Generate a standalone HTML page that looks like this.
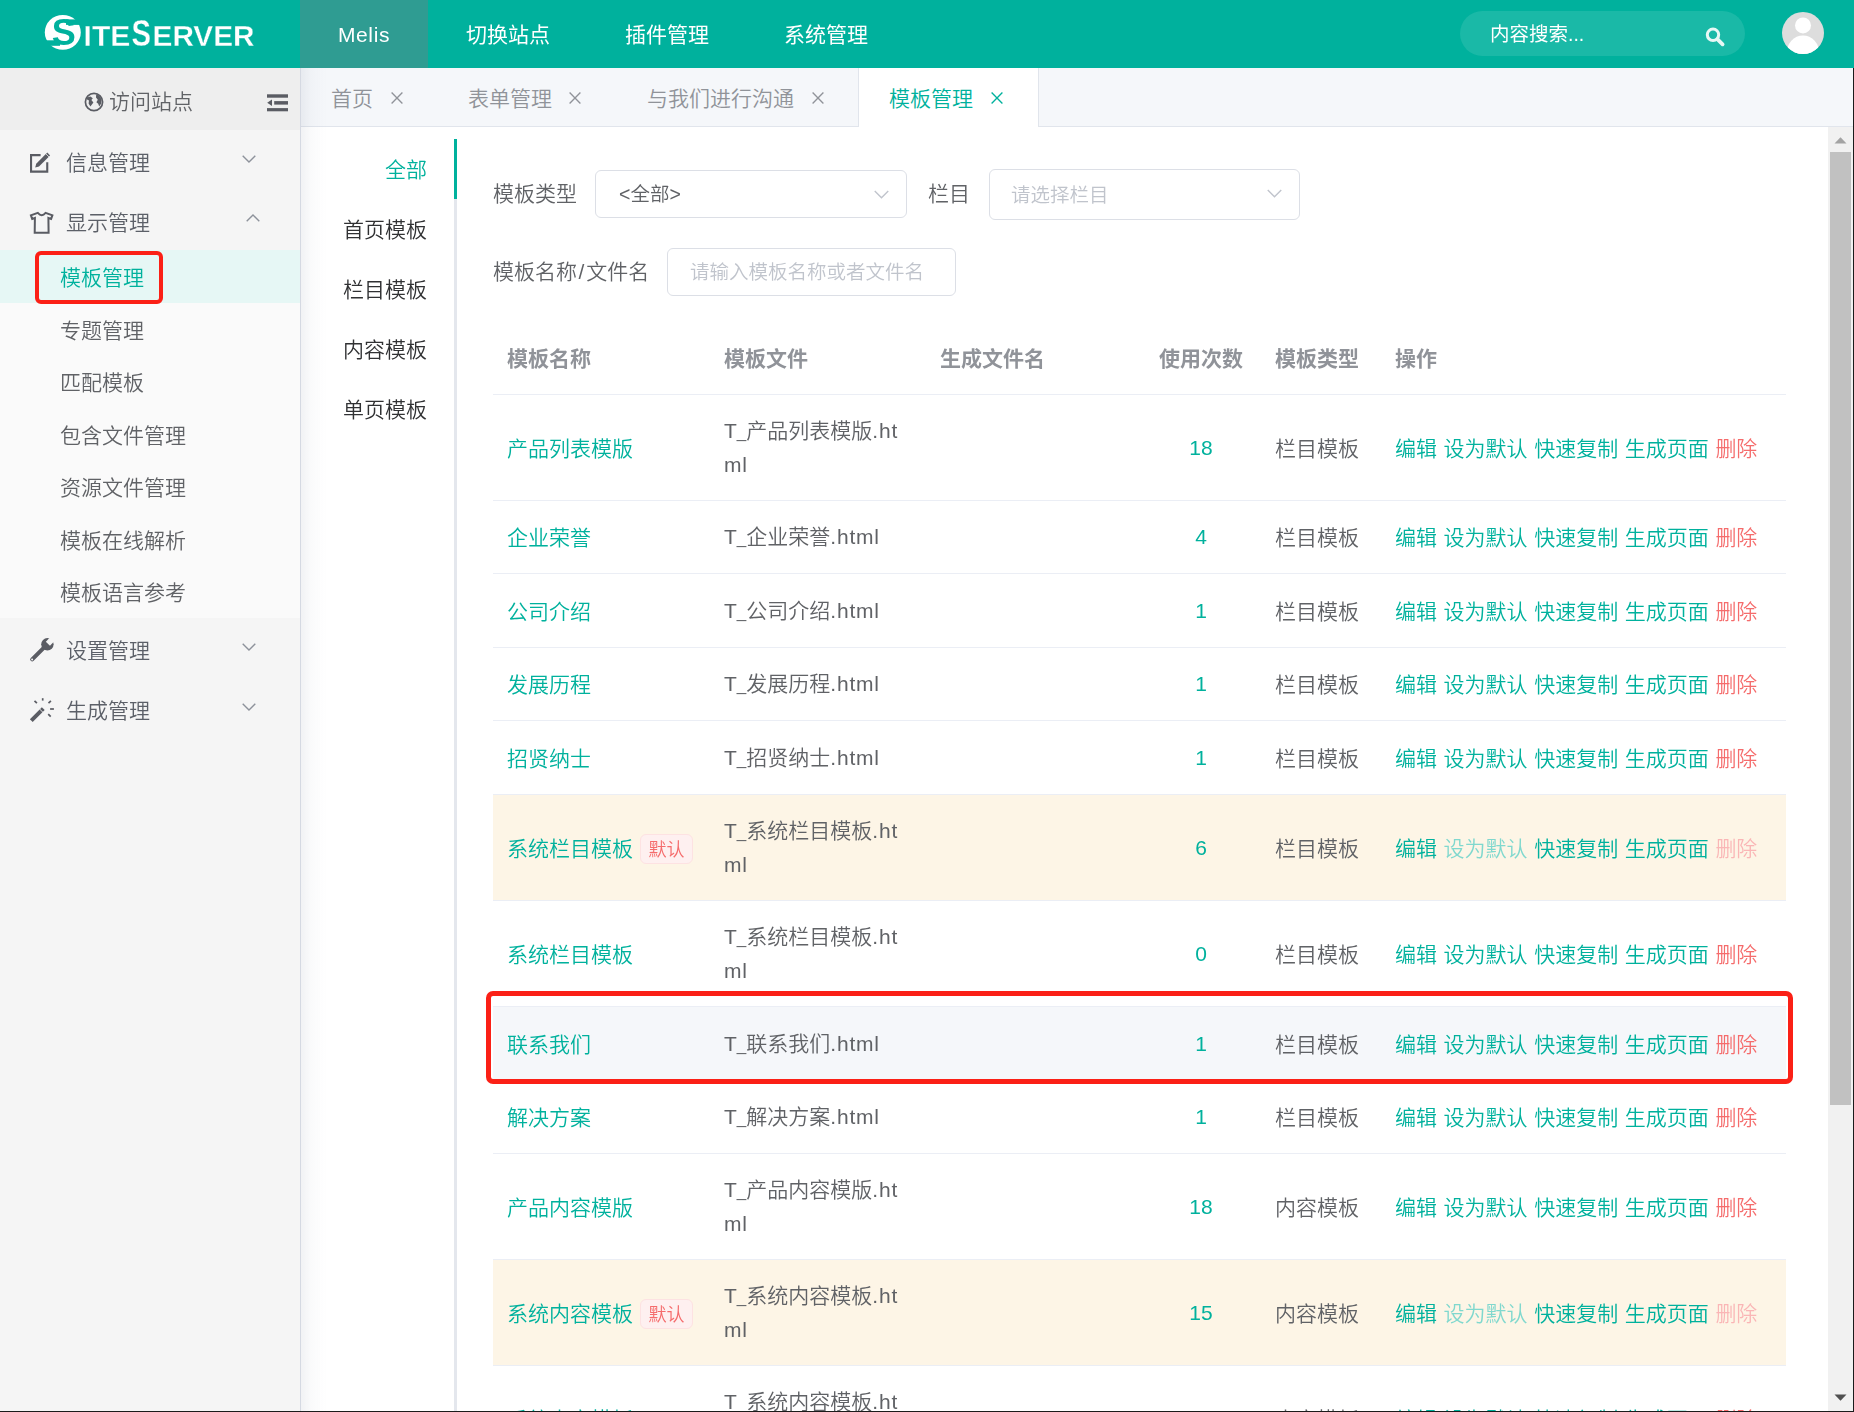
<!DOCTYPE html>
<html lang="zh-CN">
<head>
<meta charset="utf-8">
<title>SiteServer CMS - 模板管理</title>
<style>

*{box-sizing:border-box;margin:0;padding:0}
html,body{width:1854px;height:1412px;overflow:hidden;background:#fff}
body{font-family:"Liberation Sans","Noto Sans CJK SC",sans-serif;font-size:21px;font-weight:350;color:#606266;-webkit-font-smoothing:antialiased}
#app{position:relative;width:1854px;height:1412px;overflow:hidden;background:#fff}
.side,.main,.hdr{will-change:transform}
a{text-decoration:none;color:inherit}
svg{display:block}

/* ---------- top header ---------- */
.hdr{position:absolute;left:0;top:0;width:1854px;height:68px;background:#00b19d;color:#fff}
.logo{position:absolute;left:0;top:0;width:300px;height:68px}
.logo .disc{position:absolute;left:45px;top:15px;width:36px;height:35px}
.logo .w{position:absolute;white-space:nowrap;font-weight:bold;color:#fff;line-height:1;transform-origin:0 0}
.nav{position:absolute;left:300px;top:0;height:68px;display:flex}
.nav a{display:block;height:68px;line-height:69px;font-weight:400;padding:0 36.5px 0 38.5px;font-size:21px;color:#fff;white-space:nowrap}
.nav a.on{background:#2f9c92;letter-spacing:.6px;width:127.5px;padding:0 0 0 38px}
.srch{position:absolute;left:1460px;top:11px;width:285px;height:45px;border-radius:23px;background:rgba(255,255,255,.1)}
.srch span{position:absolute;left:30px;top:0;line-height:46px;font-weight:400;font-size:19.5px;color:#fff}
.srch svg{position:absolute;left:245px;top:16px}
.avatar{position:absolute;left:1782px;top:12px;width:42px;height:42px;border-radius:50%;background:#dddddd;overflow:hidden}

/* ---------- sidebar ---------- */
.side{position:absolute;left:0;top:68px;width:301px;height:1344px;background:#f5f5f5;border-right:1px solid #d5d9e2}
.visit{position:absolute;left:0;top:0;width:300px;height:62px;background:#eeeeee;color:#606266}
.visit .t{position:absolute;left:109px;top:0;line-height:68.5px;font-size:21px}
.visit .globe{position:absolute;left:84px;top:24px}
.visit .fold{position:absolute;left:267px;top:26px}
.menu{position:absolute;left:0;top:62px;width:300px}
.mi{position:relative;height:60px;line-height:66px;padding-left:66px;font-size:21px;color:#5c6068}
.mi svg.ic{position:absolute;left:29px;top:18px}
.mi svg.ar{position:absolute;top:23px}
.sub{background:#fafafa;height:367.5px}
.si{height:52.5px;line-height:56px;padding-left:60px;font-size:21px;color:#606266}
.si.on{background:#e6f7f5;color:#00b19d}
.mark1{position:absolute;left:35px;top:183px;width:128px;height:53px;border:4px solid #fb2016;border-radius:6px}

/* ---------- tab bar ---------- */
.tabs{position:absolute;left:301px;top:68px;width:1553px;height:59px;background:#f5f7fa;border-bottom:1px solid #e1e5ec}
.tab{position:absolute;top:0;height:59px;line-height:62px;font-size:21px;color:#909399;white-space:nowrap}
.tab svg{position:absolute;top:24px}
.tab.on{color:#00b19d;background:#fff;border-left:1px solid #e1e5ec;border-right:1px solid #e1e5ec;height:59px}
.sideshadow{z-index:5;position:absolute;left:301px;top:68px;width:26px;height:1344px;background:linear-gradient(to right,rgba(70,80,110,.075),rgba(70,80,110,.025) 40%,rgba(70,80,110,0));pointer-events:none}

/* ---------- main ---------- */
.main{position:absolute;left:301px;top:127px;width:1527px;height:1285px;overflow:hidden;background:#fff}
.vt{position:absolute;left:0;top:12px;width:156px;height:1300px}
.vt .line{position:absolute;left:153px;top:0;width:3px;height:1300px;background:#e4e7ed}
.vt .bar{position:absolute;left:153px;top:0;width:3px;height:60px;background:#00b19d}
.vt .it{height:60px;line-height:62px;text-align:right;padding-right:30px;font-size:21px;color:#303133}
.vt .it.on{color:#00b19d}

.lbl{position:absolute;font-size:21px;color:#606266;line-height:48px;white-space:nowrap}
.inp{position:absolute;border:1px solid #dcdfe6;border-radius:6px;background:#fff;font-size:19.5px;color:#606266;white-space:nowrap}
.inp span{position:absolute;top:0}
.inp .ph{color:#c0c4cc}
.inp svg{position:absolute}

/* ---------- table ---------- */
.tb{position:absolute;left:192px;top:0;width:1293px}
.r{position:absolute;left:0;width:1293px;border-bottom:1px solid #ebeef5}
.r.warn{background:#fdf5e6}
.r.hov{background:#f5f7fa}
.c{position:absolute;top:0;height:100%;padding:0 15px;display:flex;align-items:center;line-height:34px;font-size:21px;color:#606266}
.c>div{width:100%;word-break:break-all;position:relative;top:1px}
.c2>div{top:0}
.t1{letter-spacing:0}.us{font-size:17px;line-height:0}.t2{letter-spacing:.8px}
.c1{left:0;width:216px}.c2{left:216px;width:216px}.c3{left:432px;width:216px}
.c4{left:648px;width:120px;text-align:center}.c5{left:768px;width:120px}.c6{left:888px;width:405px;white-space:nowrap;word-spacing:.75px}
.c1,.c5,.c6{padding-left:14px}
.c4>div{top:0}
.th .c{font-weight:bold;color:#909399}
.th .c>div{top:1px}
.lk{color:#00b19d}
.del{color:#f56c6c}
.lk.dis{color:#80d8ce}
.del.dis{color:#fab6b6}
.tag{display:inline-block;height:30px;line-height:31px;padding:0 7.5px;margin-left:7px;font-size:18px;color:#f56c6c;background:#fef0f0;border:1px solid #fde2e2;border-radius:6px;vertical-align:0}
.mark2{z-index:6;position:absolute;left:185px;top:864px;width:1307px;height:93px;border:5px solid #fb2016;border-radius:7px}

/* ---------- scrollbar & screenshot edges ---------- */
.sb{position:absolute;left:1828px;top:127px;width:25px;height:1284px;background:#f1f1f1}
.sb .thumb{position:absolute;left:2px;top:25px;width:21px;height:953px;background:#c1c1c1}
.sb svg{position:absolute;left:6px}
.edge-r{position:absolute;left:1853px;top:68px;width:1px;height:1344px;background:#1b1b1b}
.edge-b{position:absolute;left:0;top:1411px;width:1854px;height:1px;background:#1b1b1b}

</style>
</head>
<body>
<div id="app">

<div class="hdr">
  <div class="logo">
    <svg width="300" height="68" viewBox="0 0 300 68">
      <ellipse cx="62.8" cy="32.4" rx="18" ry="17.4" fill="#fff"/>
      <text x="63.8" y="45.4" text-anchor="middle" font-family="Liberation Sans, sans-serif" font-weight="bold" font-size="36" fill="#00b19d">S</text>
      <rect x="66" y="19.4" width="16" height="5.5" fill="#00b19d"/>
      <rect x="43" y="40.3" width="17" height="5.5" fill="#00b19d"/>
      <g fill="#fff" stroke="#00b19d" stroke-width="0.3" font-family="Liberation Sans, sans-serif" font-weight="bold">
        <text x="0" y="0" font-size="28.6" transform="translate(83.6 45.7) scale(1.05 1)">ITE</text>
        <text x="0" y="0" font-size="37.5" transform="translate(131.4 45.7) scale(.78 1)">S</text>
        <text x="0" y="0" font-size="28.6" transform="translate(152.6 45.7) scale(1.04 1)">ERVER</text>
      </g>
    </svg>
  </div>
  <div class="nav">
    <a class="on">Melis</a><a>切换站点</a><a>插件管理</a><a>系统管理</a>
  </div>
  <div class="srch">
    <span>内容搜索...</span>
    <svg width="21" height="20" viewBox="0 0 21 20">
      <circle cx="8" cy="7.8" r="5.7" fill="none" stroke="#e8f8f5" stroke-width="3"/>
      <path d="M12.6,12.4 L17.6,17.3" stroke="#e8f8f5" stroke-width="3.8" stroke-linecap="round"/>
    </svg>
  </div>
  <div class="avatar">
    <svg width="42" height="42" viewBox="0 0 42 42">
      <circle cx="21" cy="13.4" r="8" fill="#fff"/>
      <ellipse cx="21" cy="42" rx="16.5" ry="18.6" fill="#fff"/>
    </svg>
  </div>
</div>


<div class="side">
  <div class="visit">
    <svg class="globe" width="20" height="20" viewBox="0 0 20 20">
  <circle cx="10" cy="10" r="8.6" fill="none" stroke="#5a5c63" stroke-width="1.7"/>
  <path d="M3.0,5.6 L6.4,4.4 L8.8,6.2 L7.4,8.0 L9.4,10.4 L6.4,14.6 L4.6,11.4 L5.0,8.6 L3.0,7.6 Z" fill="#5a5c63"/>
  <path d="M12.2,2.2 L15.4,3.8 L17.6,7.4 L17.2,11.6 L15.2,14.6 L14.2,11.8 L12.4,10.2 L13.8,7.8 L12.0,5.6 Z" fill="#5a5c63"/>
</svg>
    <span class="t">访问站点</span>
    <svg class="fold" width="21" height="18" viewBox="0 0 21 18">
  <rect x="0" y="0.3" width="21" height="3.4" fill="#5a5c63"/>
  <rect x="7.2" y="7.1" width="13.8" height="3.5" fill="#5a5c63"/>
  <rect x="0" y="14.1" width="21" height="3.2" fill="#5a5c63"/>
  <path d="M0.2,8.8 L5,5.6 V12 Z" fill="#5a5c63"/>
</svg>
  </div>
  <div class="menu">
    <div class="mi"><svg class="ic" style="top:20px" width="24" height="24" viewBox="0 0 24 24">
  <path d="M11.6,5.15 H2.05 V21.65 H18.25 V12.2" fill="none" stroke="#5a5c63" stroke-width="2.1"/>
  <path d="M6.2,17.5 L7.2,13.7 L18.3,2.6 L21.1,5.4 L10,16.5 Z" fill="#5a5c63"/>
  <path d="M16.3,3.2 L20.4,7.3" stroke="#f5f5f5" stroke-width="0.8"/>
</svg>信息管理<svg class="ar" style="left:242px;top:25px" width="14" height="8" viewBox="0 0 14 8"><polyline points="0.7,0.8 7,7 13.3,0.8" fill="none" stroke="#8d929b" stroke-width="1.4"/></svg></div>
    <div class="mi"><svg class="ic" style="top:20px" width="26" height="26" viewBox="0 0 26 26">
  <path d="M8.8,2.9 Q12.7,7.4 16.6,2.9 L23.4,5.3 L22.1,8.9 L19.4,8.0 L19.6,22.8 H5.7 L5.9,8.0 L3.2,8.9 L1.9,5.3 Z" fill="none" stroke="#5a5c63" stroke-width="2" stroke-linejoin="miter"/>
</svg>显示管理<svg class="ar" style="left:246px;top:24px" width="14" height="8" viewBox="0 0 14 8"><polyline points="0.7,7.2 7,1 13.3,7.2" fill="none" stroke="#8d929b" stroke-width="1.4"/></svg></div>
    <div class="sub">
      <div class="si on">模板管理</div>
      <div class="si">专题管理</div>
      <div class="si">匹配模板</div>
      <div class="si">包含文件管理</div>
      <div class="si">资源文件管理</div>
      <div class="si">模板在线解析</div>
      <div class="si">模板语言参考</div>
    </div>
    <div class="mi"><svg class="ic" style="top:19px" width="26" height="26" viewBox="0 0 26 26">
  <path d="M3.2,22.4 L15.2,10.4" stroke="#5a5c63" stroke-width="4.1" stroke-linecap="round"/>
  <circle cx="18.4" cy="7.3" r="6.2" fill="#5a5c63"/>
  <path d="M18.9,6.7 L27,-1.6" stroke="#f5f5f5" stroke-width="5.8"/>
  <circle cx="3.1" cy="22.5" r="1" fill="#f5f5f5"/>
</svg>设置管理<svg class="ar" style="left:242px;top:25px" width="14" height="8" viewBox="0 0 14 8"><polyline points="0.7,0.8 7,7 13.3,0.8" fill="none" stroke="#8d929b" stroke-width="1.4"/></svg></div>
    <div class="mi"><svg class="ic" style="top:19px" width="26" height="26" viewBox="0 0 26 26">
  <path d="M2.3,23.7 L14.3,11.7" stroke="#5a5c63" stroke-width="4"/>
  <path d="M10.4,11.8 L14.0,15.4" stroke="#f5f5f5" stroke-width="0.9"/>
  <g stroke="#5a5c63" stroke-width="1.7">
    <path d="M13.7,1.2 V3.6"/>
    <path d="M5.5,3.9 L7.9,6.2"/>
    <path d="M21.9,3.9 L19.5,6.2"/>
    <path d="M21.1,12 H24.9"/>
    <path d="M19.2,17.2 L21.7,19.7"/>
  </g>
</svg>生成管理<svg class="ar" style="left:242px;top:25px" width="14" height="8" viewBox="0 0 14 8"><polyline points="0.7,0.8 7,7 13.3,0.8" fill="none" stroke="#8d929b" stroke-width="1.4"/></svg></div>
  </div>
  <div class="mark1"></div>
</div>


<div class="tabs">
  <div class="tab" style="left:30px">首页<svg style="left:60px" width="12" height="12" viewBox="0 0 12 12"><path d="M0.6,0.6 L11.4,11.4 M11.4,0.6 L0.6,11.4" stroke="#909399" stroke-width="1.35" fill="none"/></svg></div>
  <div class="tab" style="left:167px">表单管理<svg style="left:101px" width="12" height="12" viewBox="0 0 12 12"><path d="M0.6,0.6 L11.4,11.4 M11.4,0.6 L0.6,11.4" stroke="#909399" stroke-width="1.35" fill="none"/></svg></div>
  <div class="tab" style="left:346px">与我们进行沟通<svg style="left:165px" width="12" height="12" viewBox="0 0 12 12"><path d="M0.6,0.6 L11.4,11.4 M11.4,0.6 L0.6,11.4" stroke="#909399" stroke-width="1.35" fill="none"/></svg></div>
  <div class="tab on" style="left:557px;width:181px;padding-left:30px">模板管理<svg style="left:132px" width="12" height="12" viewBox="0 0 12 12"><path d="M0.6,0.6 L11.4,11.4 M11.4,0.6 L0.6,11.4" stroke="#00b19d" stroke-width="1.35" fill="none"/></svg></div>
</div>
<div class="sideshadow"></div>

<div class="main">

<div class="vt">
  <div class="line"></div><div class="bar"></div>
  <div class="it on">全部</div>
  <div class="it">首页模板</div>
  <div class="it">栏目模板</div>
  <div class="it">内容模板</div>
  <div class="it">单页模板</div>
</div>


<div class="lbl" style="left:192px;top:43px">模板类型</div>
<div class="inp" style="left:294px;top:43px;width:312px;height:48px"><span style="left:23px;line-height:47px">&lt;全部&gt;</span><svg class="" style="left:278px;top:19px" width="15" height="9" viewBox="0 0 14 8"><polyline points="0.7,0.8 7,7 13.3,0.8" fill="none" stroke="#c0c4cc" stroke-width="1.3"/></svg></div>
<div class="lbl" style="left:627px;top:43px">栏目</div>
<div class="inp" style="left:688px;top:42px;width:311px;height:51px"><span class="ph" style="left:21px;line-height:50px">请选择栏目</span><svg class="" style="left:277px;top:19px" width="15" height="9" viewBox="0 0 14 8"><polyline points="0.7,0.8 7,7 13.3,0.8" fill="none" stroke="#c0c4cc" stroke-width="1.3"/></svg></div>
<div class="lbl" style="left:192px;top:121px">模板名称<span style="padding:0 2px 0 1.5px">/</span>文件名</div>
<div class="inp" style="left:366px;top:121px;width:289px;height:48px"><span class="ph" style="left:22px;line-height:46px">请输入模板名称或者文件名</span></div>

<div class="tb">
<div class="r th" style="top:194px;height:74px"><div class="c c1"><div>模板名称</div></div><div class="c c2"><div>模板文件</div></div><div class="c c3"><div>生成文件名</div></div><div class="c c4"><div>使用次数</div></div><div class="c c5"><div>模板类型</div></div><div class="c c6"><div>操作</div></div></div>
<div class="r " style="top:268px;height:106px"><div class="c c1"><div style="white-space:nowrap"><a class="lk">产品列表模版</a></div></div><div class="c c2"><div><span class="t1">T<span class="us">_</span></span>产品列表模版<span class="t2">.html</span></div></div><div class="c c3"><div></div></div><div class="c c4"><div><a class="lk">18</a></div></div><div class="c c5"><div>栏目模板</div></div><div class="c c6"><div><a class="lk">编辑</a> <a class="lk">设为默认</a> <a class="lk">快速复制</a> <a class="lk">生成页面</a> <a class="del">删除</a></div></div></div>
<div class="r " style="top:374px;height:73px"><div class="c c1"><div style="white-space:nowrap"><a class="lk">企业荣誉</a></div></div><div class="c c2"><div><span class="t1">T<span class="us">_</span></span>企业荣誉<span class="t2">.html</span></div></div><div class="c c3"><div></div></div><div class="c c4"><div><a class="lk">4</a></div></div><div class="c c5"><div>栏目模板</div></div><div class="c c6"><div><a class="lk">编辑</a> <a class="lk">设为默认</a> <a class="lk">快速复制</a> <a class="lk">生成页面</a> <a class="del">删除</a></div></div></div>
<div class="r " style="top:447px;height:74px"><div class="c c1"><div style="white-space:nowrap"><a class="lk">公司介绍</a></div></div><div class="c c2"><div><span class="t1">T<span class="us">_</span></span>公司介绍<span class="t2">.html</span></div></div><div class="c c3"><div></div></div><div class="c c4"><div><a class="lk">1</a></div></div><div class="c c5"><div>栏目模板</div></div><div class="c c6"><div><a class="lk">编辑</a> <a class="lk">设为默认</a> <a class="lk">快速复制</a> <a class="lk">生成页面</a> <a class="del">删除</a></div></div></div>
<div class="r " style="top:521px;height:73px"><div class="c c1"><div style="white-space:nowrap"><a class="lk">发展历程</a></div></div><div class="c c2"><div><span class="t1">T<span class="us">_</span></span>发展历程<span class="t2">.html</span></div></div><div class="c c3"><div></div></div><div class="c c4"><div><a class="lk">1</a></div></div><div class="c c5"><div>栏目模板</div></div><div class="c c6"><div><a class="lk">编辑</a> <a class="lk">设为默认</a> <a class="lk">快速复制</a> <a class="lk">生成页面</a> <a class="del">删除</a></div></div></div>
<div class="r " style="top:594px;height:74px"><div class="c c1"><div style="white-space:nowrap"><a class="lk">招贤纳士</a></div></div><div class="c c2"><div><span class="t1">T<span class="us">_</span></span>招贤纳士<span class="t2">.html</span></div></div><div class="c c3"><div></div></div><div class="c c4"><div><a class="lk">1</a></div></div><div class="c c5"><div>栏目模板</div></div><div class="c c6"><div><a class="lk">编辑</a> <a class="lk">设为默认</a> <a class="lk">快速复制</a> <a class="lk">生成页面</a> <a class="del">删除</a></div></div></div>
<div class="r warn" style="top:668px;height:106px"><div class="c c1"><div style="white-space:nowrap"><a class="lk">系统栏目模板</a><span class="tag">默认</span></div></div><div class="c c2"><div><span class="t1">T<span class="us">_</span></span>系统栏目模板<span class="t2">.html</span></div></div><div class="c c3"><div></div></div><div class="c c4"><div><a class="lk">6</a></div></div><div class="c c5"><div>栏目模板</div></div><div class="c c6"><div><a class="lk">编辑</a> <a class="lk dis">设为默认</a> <a class="lk">快速复制</a> <a class="lk">生成页面</a> <a class="del dis">删除</a></div></div></div>
<div class="r " style="top:774px;height:106px"><div class="c c1"><div style="white-space:nowrap"><a class="lk">系统栏目模板</a></div></div><div class="c c2"><div><span class="t1">T<span class="us">_</span></span>系统栏目模板<span class="t2">.html</span></div></div><div class="c c3"><div></div></div><div class="c c4"><div><a class="lk">0</a></div></div><div class="c c5"><div>栏目模板</div></div><div class="c c6"><div><a class="lk">编辑</a> <a class="lk">设为默认</a> <a class="lk">快速复制</a> <a class="lk">生成页面</a> <a class="del">删除</a></div></div></div>
<div class="r hov" style="top:880px;height:74px"><div class="c c1"><div style="white-space:nowrap"><a class="lk">联系我们</a></div></div><div class="c c2"><div><span class="t1">T<span class="us">_</span></span>联系我们<span class="t2">.html</span></div></div><div class="c c3"><div></div></div><div class="c c4"><div><a class="lk">1</a></div></div><div class="c c5"><div>栏目模板</div></div><div class="c c6"><div><a class="lk">编辑</a> <a class="lk">设为默认</a> <a class="lk">快速复制</a> <a class="lk">生成页面</a> <a class="del">删除</a></div></div></div>
<div class="r " style="top:954px;height:73px"><div class="c c1"><div style="white-space:nowrap"><a class="lk">解决方案</a></div></div><div class="c c2"><div><span class="t1">T<span class="us">_</span></span>解决方案<span class="t2">.html</span></div></div><div class="c c3"><div></div></div><div class="c c4"><div><a class="lk">1</a></div></div><div class="c c5"><div>栏目模板</div></div><div class="c c6"><div><a class="lk">编辑</a> <a class="lk">设为默认</a> <a class="lk">快速复制</a> <a class="lk">生成页面</a> <a class="del">删除</a></div></div></div>
<div class="r " style="top:1027px;height:106px"><div class="c c1"><div style="white-space:nowrap"><a class="lk">产品内容模版</a></div></div><div class="c c2"><div><span class="t1">T<span class="us">_</span></span>产品内容模版<span class="t2">.html</span></div></div><div class="c c3"><div></div></div><div class="c c4"><div><a class="lk">18</a></div></div><div class="c c5"><div>内容模板</div></div><div class="c c6"><div><a class="lk">编辑</a> <a class="lk">设为默认</a> <a class="lk">快速复制</a> <a class="lk">生成页面</a> <a class="del">删除</a></div></div></div>
<div class="r warn" style="top:1133px;height:106px"><div class="c c1"><div style="white-space:nowrap"><a class="lk">系统内容模板</a><span class="tag">默认</span></div></div><div class="c c2"><div><span class="t1">T<span class="us">_</span></span>系统内容模板<span class="t2">.html</span></div></div><div class="c c3"><div></div></div><div class="c c4"><div><a class="lk">15</a></div></div><div class="c c5"><div>内容模板</div></div><div class="c c6"><div><a class="lk">编辑</a> <a class="lk dis">设为默认</a> <a class="lk">快速复制</a> <a class="lk">生成页面</a> <a class="del dis">删除</a></div></div></div>
<div class="r " style="top:1239px;height:106px"><div class="c c1"><div style="white-space:nowrap"><a class="lk">系统内容模板</a></div></div><div class="c c2"><div><span class="t1">T<span class="us">_</span></span>系统内容模板<span class="t2">.html</span></div></div><div class="c c3"><div></div></div><div class="c c4"><div><a class="lk">0</a></div></div><div class="c c5"><div>内容模板</div></div><div class="c c6"><div><a class="lk">编辑</a> <a class="lk">设为默认</a> <a class="lk">快速复制</a> <a class="lk">生成页面</a> <a class="del">删除</a></div></div></div>
</div>
<div class="mark2"></div>
</div>

<div class="sb">
  <div class="thumb"></div>
  <svg style="top:10px" width="13" height="7" viewBox="0 0 13 7"><path d="M0.5,6.5 L6.5,0.3 L12.5,6.5 Z" fill="#a3a3a3"/></svg>
  <svg style="top:1267px" width="13" height="7" viewBox="0 0 13 7"><path d="M0.5,0.5 L6.5,6.7 L12.5,0.5 Z" fill="#505050"/></svg>
</div>

<div class="edge-r"></div>
<div class="edge-b"></div>
</div>
</body>
</html>
